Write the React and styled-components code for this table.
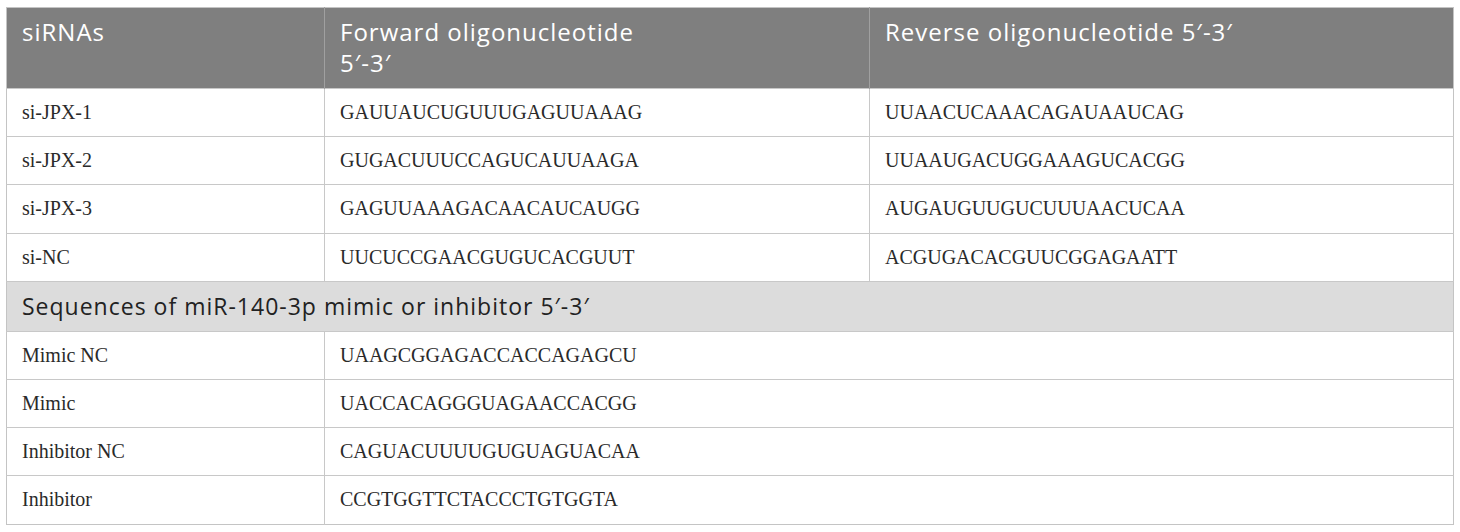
import React from "react";
import styled, { createGlobalStyle } from "styled-components";

const Global = createGlobalStyle`
  html, body { margin: 0; padding: 0; background: #ffffff; }
  body { padding: 7px 0 0 6px; }
`;

const Table = styled.table`
  border-collapse: collapse;
  width: 1447px;
  table-layout: fixed;
  border: 1px solid #c4c4c4;
`;

const HeadCell = styled.th`
  background: #7f7f7f;
  color: #ffffff;
  font-family: "Open Sans", "Noto Sans", sans-serif;
  font-weight: 400;
  font-size: 24px;
  letter-spacing: 1px;
  line-height: 31px;
  text-align: left;
  vertical-align: top;
  padding: 8px 15px 10px 15px;
  height: 60px;
  border-left: 1px solid #a0a0a0;
  &:first-child { border-left: none; }
`;

const Row = styled.tr`
  border-top: 1px solid #c8c8c8;
`;

const Cell = styled.td`
  font-family: "Liberation Serif", "DejaVu Serif", serif;
  font-size: 20px;
  color: #2a2a2a;
  padding: 0 15px;
  height: ${(p) => p.$h || 47.2}px;
  vertical-align: middle;
  border-left: 1px solid #c8c8c8;
  &:first-child { border-left: none; }
`;

const SectionCell = styled.td`
  background: #dcdcdc;
  font-family: "Open Sans", "Noto Sans", sans-serif;
  font-size: 23px;
  letter-spacing: 1px;
  color: #222222;
  padding: 0 15px;
  height: 49px;
  vertical-align: middle;
`;

const siRows = [
  ["si-JPX-1", "GAUUAUCUGUUUGAGUUAAAG", "UUAACUCAAACAGAUAAUCAG"],
  ["si-JPX-2", "GUGACUUUCCAGUCAUUAAGA", "UUAAUGACUGGAAAGUCACGG"],
  ["si-JPX-3", "GAGUUAAAGACAACAUCAUGG", "AUGAUGUUGUCUUUAACUCAA"],
  ["si-NC", "UUCUCCGAACGUGUCACGUUT", "ACGUGACACGUUCGGAGAATT"],
];

const miRows = [
  ["Mimic NC", "UAAGCGGAGACCACCAGAGCU"],
  ["Mimic", "UACCACAGGGUAGAACCACGG"],
  ["Inhibitor NC", "CAGUACUUUUGUGUAGUACAA"],
  ["Inhibitor", "CCGTGGTTCTACCCTGTGGTA"],
];

export default function App() {
  return (
    <>
      <Global />
      <Table>
        <colgroup>
          <col style={{ width: 318 }} />
          <col style={{ width: 545 }} />
          <col style={{ width: 584 }} />
        </colgroup>
        <thead>
          <tr>
            <HeadCell>siRNAs</HeadCell>
            <HeadCell>
              Forward oligonucleotide
              <br />
              5′-3′
            </HeadCell>
            <HeadCell>Reverse oligonucleotide 5′-3′</HeadCell>
          </tr>
        </thead>
        <tbody>
          {siRows.map((r) => (
            <Row key={r[0]}>
              <Cell>{r[0]}</Cell>
              <Cell>{r[1]}</Cell>
              <Cell>{r[2]}</Cell>
            </Row>
          ))}
          <Row>
            <SectionCell colSpan={3}>
              Sequences of miR-140-3p mimic or inhibitor 5′-3′
            </SectionCell>
          </Row>
          {miRows.map((r) => (
            <Row key={r[0]}>
              <Cell $h={47.2}>{r[0]}</Cell>
              <Cell $h={47.2} colSpan={2}>{r[1]}</Cell>
            </Row>
          ))}
        </tbody>
      </Table>
    </>
  );
}
